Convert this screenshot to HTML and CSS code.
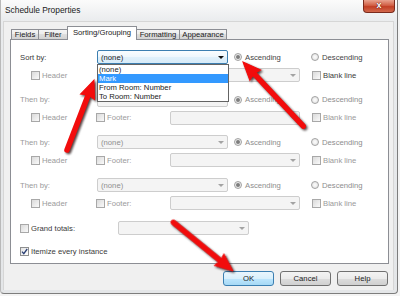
FILE: index.html
```html
<!DOCTYPE html>
<html lang="en">
<head>
<meta charset="UTF-8" />
<meta name="viewport" content="width=device-width, initial-scale=1" />
<title>Schedule Properties</title>
<link rel="stylesheet" href="styles.css">
</head>
<body>
<div class="window">
  <div class="titlebar">
    <span class="title">Schedule Properties</span>
    <div class="close">x</div>
  </div>

  <div class="client">
    <div class="tabs">
      <div class="tab t-fields">Fields</div>
      <div class="tab t-filter">Filter</div>
      <div class="tab t-sort active">Sorting/Grouping</div>
      <div class="tab t-format">Formatting</div>
      <div class="tab t-appear">Appearance</div>
    </div>

    <div class="panel">
      <!-- sort by -->
      <div class="group">
        <div class="row">
          <span class="label">Sort by:</span>
          <div class="combo focus">
            <span>(none)</span><span class="arrow"></span>
            <div class="list">
              <div class="item">(none)</div>
              <div class="item sel">Mark</div>
              <div class="item">From Room: Number</div>
              <div class="item">To Room: Number</div>
            </div>
          </div>
          <span class="opt asc"><span class="radio on"></span>Ascending</span>
          <span class="opt"><span class="radio"></span>Descending</span>
        </div>
        <div class="row sub">
          <span class="chk hdr off"><span class="box"></span>Header</span>
          <span class="chk ftr off covered"><span class="box"></span>Footer:</span>
          <div class="combo wide off"><span></span><span class="arrow"></span></div>
          <span class="chk blank"><span class="box"></span>Blank line</span>
        </div>
      </div>

      <!-- then by (1) -->
      <div class="group">
        <div class="row">
          <span class="label off">Then by:</span>
          <div class="combo off"><span class="covered">(none)</span><span class="arrow"></span></div>
          <span class="opt asc off"><span class="radio on"></span>Ascending</span>
          <span class="opt off"><span class="radio"></span>Descending</span>
        </div>
        <div class="row sub">
          <span class="chk hdr off"><span class="box"></span>Header</span>
          <span class="chk ftr off"><span class="box"></span>Footer:</span>
          <div class="combo wide off"><span></span><span class="arrow"></span></div>
          <span class="chk blank off"><span class="box"></span>Blank line</span>
        </div>
      </div>

      <!-- then by (2) -->
      <div class="group">
        <div class="row">
          <span class="label off">Then by:</span>
          <div class="combo off"><span>(none)</span><span class="arrow"></span></div>
          <span class="opt asc off"><span class="radio on"></span>Ascending</span>
          <span class="opt off"><span class="radio"></span>Descending</span>
        </div>
        <div class="row sub">
          <span class="chk hdr off"><span class="box"></span>Header</span>
          <span class="chk ftr off"><span class="box"></span>Footer:</span>
          <div class="combo wide off"><span></span><span class="arrow"></span></div>
          <span class="chk blank off"><span class="box"></span>Blank line</span>
        </div>
      </div>

      <!-- then by (3) -->
      <div class="group">
        <div class="row">
          <span class="label off">Then by:</span>
          <div class="combo off"><span>(none)</span><span class="arrow"></span></div>
          <span class="opt asc off"><span class="radio on"></span>Ascending</span>
          <span class="opt off"><span class="radio"></span>Descending</span>
        </div>
        <div class="row sub">
          <span class="chk hdr off"><span class="box"></span>Header</span>
          <span class="chk ftr off"><span class="box"></span>Footer:</span>
          <div class="combo wide off"><span></span><span class="arrow"></span></div>
          <span class="chk blank off"><span class="box"></span>Blank line</span>
        </div>
      </div>

      <div class="row totals">
        <span class="chk gt"><span class="box"></span>Grand totals:</span>
        <div class="combo off"><span></span><span class="arrow"></span></div>
      </div>

      <div class="row itemize">
        <span class="chk"><span class="box checked">
          <svg width="7" height="7" viewBox="0 0 7 7"><path d="M1 3.6 L2.8 5.6 L6.2 1" fill="none" stroke="#2a3f74" stroke-width="1.3"/></svg>
        </span>Itemize every instance</span>
      </div>
    </div>

    <div class="buttons">
      <div class="btn default">OK</div>
      <div class="btn">Cancel</div>
      <div class="btn">Help</div>
    </div>
  </div>
</div>

<svg class="arrows" width="400" height="296" viewBox="0 0 400 296">
  <defs>
    <filter id="blur" x="-30%" y="-30%" width="160%" height="160%">
      <feGaussianBlur stdDeviation="1.1"/>
    </filter>
    <g id="arrow75">
      <line x1="-75" y1="0" x2="-14" y2="0" stroke-width="5.5" stroke-linecap="round"/>
      <polygon points="0,0 -18,-7.5 -16,0 -18,7.5"/>
    </g>
    <g id="arrow88">
      <line x1="-88" y1="0" x2="-14" y2="0" stroke-width="5.5" stroke-linecap="round"/>
      <polygon points="0,0 -18,-7.5 -16,0 -18,7.5"/>
    </g>
    <g id="arrow77">
      <line x1="-77" y1="0" x2="-14" y2="0" stroke-width="5.5" stroke-linecap="round"/>
      <polygon points="0,0 -18,-7.5 -16,0 -18,7.5"/>
    </g>
  </defs>

  <!-- shadows -->
  <g fill="#1a0000" stroke="#1a0000" opacity="0.75" filter="url(#blur)">
    <use href="#arrow75" transform="translate(95.5,81.5) rotate(-68.9)"/>
    <use href="#arrow88" transform="translate(244.5,63.5) rotate(-133.2)"/>
    <use href="#arrow77" transform="translate(234.5,272.5) rotate(39.2)"/>
  </g>

  <!-- arrows -->
  <g fill="#f20c0c" stroke="#f20c0c">
    <use href="#arrow75" transform="translate(94,80) rotate(-68.9)"/>
    <use href="#arrow88" transform="translate(243,62) rotate(-133.2)"/>
    <use href="#arrow77" transform="translate(233,271) rotate(39.2)"/>
  </g>
</svg>
</body>
</html>
```

FILE: styles.css
```css
* {
  box-sizing: border-box;
}

body {
  margin: 0;
  width: 400px;
  height: 296px;
  overflow: hidden;
  position: relative;
  background: #f4f4f4;
  font-family: "Liberation Sans", Arial, sans-serif;
  font-size: 7.7px;
  color: #333;
}

.window {
  width: 398px;
  height: 294px;
  padding: 0 3px 3px 3px;
  border: 1px solid #7d7d7d;
  border-top: none;
  border-left-color: #b9b9b9;
  border-radius: 0 0 4px 4px;
  background: linear-gradient(#fbfbfb, #e9ebed 22px, #e4e6e8);
  display: flex;
  flex-direction: column;
}

.titlebar {
  height: 21px;
  display: flex;
  align-items: flex-start;
}

.title {
  font-size: 8.4px;
  color: #1b1b1b;
  margin: 5px 0 0 1px;
}

.close {
  margin-left: auto;
  margin-right: -1px;
  width: 32px;
  height: 13px;
  border: 1px solid #7a2a1c;
  border-top: none;
  border-radius: 0 0 4px 4px;
  background: linear-gradient(#e9a38f, #d15f45 45%, #c23f25 55%, #d2684c);
  color: #fff;
  font-weight: bold;
  font-size: 9px;
  line-height: 11px;
  text-align: center;
  text-shadow: 0 0 1px #5a1208, 0 0 1px #5a1208;
}

.client {
  flex: 1;
  background: #f0f0f0;
  padding: 4px 4px 0 6px;
  border: 1px solid #d6d6d6;
  border-bottom: none;
  margin-left: -1px;
}

/* tabs */
.tabs {
  height: 13px;
  display: flex;
  align-items: flex-end;
  padding-left: 1px;
}

.tab {
  height: 10px;
  border: 1px solid #8c8e94;
  border-bottom: none;
  margin-left: -1px;
  background: linear-gradient(#f4f4f4, #ececec 50%, #dedede 50%, #d2d2d2);
  color: #222;
  text-align: center;
  line-height: 9px;
}

.t-fields { width: 28px; margin-left: 0; }
.t-filter { width: 30px; }
.t-sort { width: 70px; }
.t-format { width: 44px; }
.t-appear { width: 48px; }

.tab.active {
  height: 14px;
  margin-bottom: -1px;
  position: relative;
  z-index: 1;
  background: #fff;
  line-height: 12px;
}

.panel {
  height: 225px;
  border: 1px solid #8c8e94;
  background: #fff;
  padding-top: 10px;
  display: flex;
  flex-direction: column;
}

.group {
  display: flex;
  flex-direction: column;
  gap: 4px;
  margin-bottom: 10.7px;
}

.row {
  display: flex;
  align-items: center;
  height: 14px;
  padding-left: 9px;
}

.row.sub {
  padding-left: 20px;
}

.label {
  width: 77px;
  color: #3a3a3a;
}

.off {
  color: #9a9a9a;
}

/* hidden under the open drop-down list */
.covered {
  visibility: hidden;
}

/* combo boxes */
.combo {
  position: relative;
  width: 131px;
  height: 14px;
  border: 1px solid #cdcdcd;
  border-radius: 2px;
  background: #f4f4f4;
  display: flex;
  align-items: center;
  padding-left: 3px;
  color: #8f8f8f;
}

.combo.wide {
  width: 130px;
}

.combo .arrow {
  margin-left: auto;
  margin-right: 3px;
  border-left: 3px solid transparent;
  border-right: 3px solid transparent;
  border-top: 3px solid #a3a3a3;
}

.combo.focus {
  border-color: #3c7fb1;
  background: linear-gradient(#fafdff, #eef7fd 50%, #e1f1fb 50%, #d6ebf8);
  color: #222;
}

.combo.focus .arrow {
  border-top-color: #111;
}

.list {
  position: absolute;
  top: 13px;
  left: -1px;
  width: 132px;
  border: 1px solid #646464;
  background: #fff;
  z-index: 5;
}

.item {
  height: 9px;
  line-height: 9px;
  padding-left: 1px;
  color: #222;
}

.item.sel {
  background: #3399ff;
  color: #fff;
}

/* radios and checks */
.opt {
  display: flex;
  align-items: center;
  width: 77px;
  color: #444;
}

.opt.asc {
  margin-left: 6px;
}

.opt.off {
  color: #8d8d8d;
}

.radio {
  position: relative;
  width: 8px;
  height: 8px;
  border-radius: 50%;
  border: 1px solid #a2a2a2;
  background: radial-gradient(#fdfdfd, #dedede);
  margin-right: 3px;
}

.radio.on::after {
  content: "";
  position: absolute;
  left: 1px;
  top: 1px;
  width: 4px;
  height: 4px;
  border-radius: 50%;
  background: #7d7d7d;
}

.chk {
  display: flex;
  align-items: center;
  color: #3a3a3a;
}

.chk.off {
  color: #9a9a9a;
}

.box {
  width: 9px;
  height: 9px;
  border: 1px solid #a8a8a8;
  background: linear-gradient(135deg, #dadada, #fafafa);
  margin-right: 2px;
  display: flex;
  align-items: center;
  justify-content: center;
}

.box.checked {
  border-color: #8e8f8f;
  background: linear-gradient(135deg, #e4e4e4, #fff);
}

.hdr { width: 65px; }
.ftr { width: 74px; }
.blank { margin-left: 12px; }
.gt { width: 98px; }

.totals {
  margin-top: 0.3px;
}

.itemize {
  margin-top: 9px;
}

/* buttons */
.buttons {
  margin-top: 7px;
  display: flex;
  justify-content: flex-end;
  gap: 6px;
  padding-right: 1px;
}

.btn {
  width: 51px;
  height: 15px;
  border: 1px solid #707070;
  border-radius: 3px;
  background: linear-gradient(#f3f3f3, #ebebeb 50%, #dddddd 50%, #d0d0d0);
  color: #222;
  text-align: center;
  line-height: 13px;
}

.btn.default {
  border-color: #3c7fb1;
  background: linear-gradient(#eaf6fd, #d9f0fc 50%, #bee6fd 50%, #a7d9f5);
}

.arrows {
  position: absolute;
  left: 0;
  top: 0;
  pointer-events: none;
}
```
